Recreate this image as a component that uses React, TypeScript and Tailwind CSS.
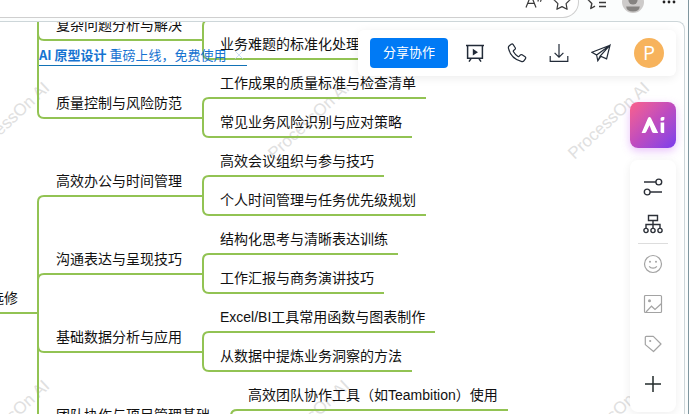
import type { ReactNode } from "react";

type Topic = { label: string; x: number; y: number };
type Leaf = Topic & { end: number };
type Branch = Topic & { fork: number; turn: "up" | "down"; leaves: Leaf[] };

// y is the underline of the topic, end is where that underline stops
const branches: Branch[] = [
  {
    label: "复杂问题分析与解决", x: 56, y: 18, fork: 203, turn: "up",
    leaves: [
      { label: "", x: 220, y: -2, end: 370 },
      { label: "业务难题的标准化处理", x: 220, y: 37, end: 370 },
    ],
  },
  {
    label: "质量控制与风险防范", x: 56, y: 96, fork: 203, turn: "up",
    leaves: [
      { label: "工作成果的质量标准与检查清单", x: 220, y: 76, end: 426 },
      { label: "常见业务风险识别与应对策略", x: 220, y: 115, end: 412 },
    ],
  },
  {
    label: "高效办公与时间管理", x: 56, y: 174, fork: 203, turn: "down",
    leaves: [
      { label: "高效会议组织与参与技巧", x: 220, y: 154, end: 384 },
      { label: "个人时间管理与任务优先级规划", x: 220, y: 193, end: 426 },
    ],
  },
  {
    label: "沟通表达与呈现技巧", x: 56, y: 252, fork: 203, turn: "down",
    leaves: [
      { label: "结构化思考与清晰表达训练", x: 220, y: 232, end: 398 },
      { label: "工作汇报与商务演讲技巧", x: 220, y: 271, end: 384 },
    ],
  },
  {
    label: "基础数据分析与应用", x: 56, y: 330, fork: 203, turn: "up",
    leaves: [
      { label: "Excel/BI工具常用函数与图表制作", x: 220, y: 310, end: 435 },
      { label: "从数据中提炼业务洞察的方法", x: 220, y: 349, end: 412 },
    ],
  },
  {
    label: "团队协作与项目管理基础", x: 56, y: 408, fork: 231, turn: "up",
    leaves: [
      { label: "高效团队协作工具（如Teambition）使用", x: 248, y: 388, end: 508 },
    ],
  },
];

const TRUNK = 38;

function branchPath({ y, fork, turn }: Branch) {
  const from = turn === "up" ? y - 12 : y + 12;
  const near = turn === "up" ? y - 6 : y + 6;
  return `M${TRUNK} ${from}V${near}Q${TRUNK} ${y} ${TRUNK + 6} ${y}H${fork}`;
}

function leafPath(branch: Branch, leaf: Leaf) {
  const near = leaf.y < branch.y ? leaf.y + 6 : leaf.y - 6;
  return `M${branch.fork} ${branch.y}V${near}Q${branch.fork} ${leaf.y} ${branch.fork + 6} ${leaf.y}H${leaf.end}`;
}

function TopicText({ label, x, y }: Topic) {
  return (
    <span className="absolute text-sm leading-5 whitespace-nowrap text-[#111111]" style={{ left: x, top: y - 25 }}>
      {label}
    </span>
  );
}

function MindMap() {
  return (
    <>
      <svg className="absolute inset-0 h-full w-full" fill="none" stroke="#92c353" strokeWidth="2" aria-hidden>
        <path d={`M${TRUNK} 0V88`} />
        <path d={`M${TRUNK} 182V600`} />
        <path d={`M0 291H${TRUNK}`} />
        {branches.map((b) => (
          <g key={b.label}>
            <path d={branchPath(b)} />
            {b.leaves.map((l) => (
              <path key={l.y} d={leafPath(b, l)} />
            ))}
          </g>
        ))}
      </svg>
      <TopicText label="选修" x={-10} y={291} />
      {branches.flatMap((b) => [b, ...b.leaves]).map((t) => (
        <TopicText key={`${t.x}-${t.y}`} label={t.label} x={t.x} y={t.y} />
      ))}
    </>
  );
}

const watermarks = [
  [9, 99], [309, 99], [609, 99],
  [9, 397], [309, 397], [609, 397],
];

function Watermarks() {
  return (
    <div aria-hidden>
      {watermarks.map(([x, y]) => (
        <span
          key={`${x}-${y}`}
          className="absolute -translate-x-1/2 -translate-y-1/2 rotate-[-43deg] text-[17px] leading-5 whitespace-nowrap text-[#e0e0e0]"
          style={{ left: x, top: y }}
        >
          ProcessOn AI
        </span>
      ))}
    </div>
  );
}

function Icon({ children, size = 20 }: { children: ReactNode; size?: number }) {
  return (
    <svg width={size} height={size} viewBox="0 0 20 20" fill="none" stroke="currentColor" strokeWidth="1.2" aria-hidden>
      {children}
    </svg>
  );
}

const toolbarItems = [
  {
    label: "演示",
    icon: (
      <>
        <path d="M1 2.5H19M2.6 2.5V15.3H17.4V2.5M6.2 15.3L4 18.6M13.8 15.3L16 18.6" strokeWidth="1.5" />
        <path d="M7.8 5.8L13 9.2L7.8 12.6Z" fill="currentColor" stroke="none" />
      </>
    ),
  },
  {
    label: "语音通话",
    icon: (
      <path d="M2.3 2.8L4.2 1.3C4.9 .8 5.7 .9 6.2 1.6L8.2 4.7C8.6 5.4 8.4 6.1 7.8 6.6L6.6 7.5C6.2 7.9 6.2 8.3 6.5 8.8C7.6 10.8 9 12.2 11 13.4C11.5 13.7 12 13.6 12.3 13.2L13.2 12.1C13.7 11.5 14.4 11.4 15.1 11.8L18.1 13.8C18.8 14.3 18.9 15 18.5 15.7L17.1 17.7C16.6 18.4 15.7 18.8 14.8 18.6C8 17 3 12 1.4 5.2C1.2 4.3 1.6 3.4 2.3 2.8Z" />
    ),
  },
  {
    label: "下载",
    icon: <path d="M10 1V14M5.6 9.8L10 14.2L14.4 9.8M1.2 13V18.3H18.8V13" />,
  },
  {
    label: "发布",
    icon: <path d="M19 2.2L1 9.3L5.6 12L19 2.2L15.6 15.8L9.2 13.1L19 2.2M5.6 12L6.8 17.8L9.8 13.4M9.2 13.1L6.8 17.8" />,
  },
];

function Toolbar() {
  return (
    <div className="absolute top-2 right-2 flex h-[46px] items-center rounded-md bg-white px-3 shadow-[0_2px_10px_rgba(0,0,0,0.08)]">
      <button className="h-[30px] w-[78px] rounded bg-[#007af5] text-[13px] text-white">分享协作</button>
      <div className="mr-3 ml-1.5 flex">
        {toolbarItems.map((item) => (
          <button key={item.label} aria-label={item.label} className="flex h-[30px] w-[42px] items-center justify-center text-[#222b38]">
            <Icon>{item.icon}</Icon>
          </button>
        ))}
      </div>
      <button className="size-[30px] rounded-full bg-[#f7b35c] font-['Open_Sans',sans-serif] text-xl leading-5 text-white">P</button>
    </div>
  );
}

const formatTools = [
  {
    label: "样式",
    icon: (
      <>
        <path d="M1 5H13M7 15H19" strokeWidth="1.4" />
        <circle cx="15.8" cy="5" r="2.9" strokeWidth="1.4" />
        <circle cx="4.2" cy="15" r="2.9" strokeWidth="1.4" />
      </>
    ),
  },
  {
    label: "结构",
    icon: (
      <g strokeWidth="1.4">
        <path d="M5.5 1.5H14.5V6.5H5.5ZM10 6.5V14.2M3 14.2V10.5H17V14.2" />
        <circle cx="3" cy="16.5" r="2.1" />
        <circle cx="10" cy="16.5" r="2.1" />
        <circle cx="17" cy="16.5" r="2.1" />
      </g>
    ),
  },
];

const insertTools = [
  {
    label: "图标",
    tone: "text-[#a3a3a3]",
    icon: (
      <>
        <circle cx="10" cy="10" r="8.5" />
        <path d="M6.2 12.4C7.8 14.8 12.2 14.8 13.8 12.4" />
        <circle cx="7" cy="7.8" r="1" fill="currentColor" stroke="none" />
        <circle cx="13" cy="7.8" r="1" fill="currentColor" stroke="none" />
      </>
    ),
  },
  {
    label: "图片",
    tone: "text-[#a3a3a3]",
    icon: (
      <>
        <rect x="1.5" y="1.5" width="17" height="17" rx="1" />
        <path d="M3 18L8.5 12.2L12 15.4L18.5 9.5" />
        <circle cx="6.5" cy="6.8" r="1.5" fill="currentColor" stroke="none" />
      </>
    ),
  },
  {
    label: "标签",
    tone: "text-[#a3a3a3]",
    icon: (
      <>
        <path d="M2.3 3.3Q2.3 2.3 3.3 2.3H10.3L18 10L10.5 17.5L2.3 10.6Z" strokeLinejoin="round" />
        <circle cx="7.2" cy="7" r="1.1" fill="currentColor" stroke="none" />
      </>
    ),
  },
  {
    label: "更多",
    tone: "text-[#222b2b]",
    icon: <path d="M10 2V18M2 10H18" strokeWidth="1.5" />,
  },
];

function SideRail() {
  return (
    <div className="absolute top-20 right-2 flex w-[46px] flex-col gap-3">
      <button
        aria-label="AI 助手"
        className="flex h-[46px] items-center justify-center rounded-lg bg-linear-135 from-[#fb5f8a] via-[#bf4bbf] to-[#7c3aed] text-white shadow-[0_3px_8px_rgba(190,80,240,0.35)]"
      >
        <svg width="24" height="18" viewBox="0 0 24 18" fill="currentColor" aria-hidden>
          <path d="M.6 17L6.8 2.4Q8.4 -.2 10.2 2.4L17.2 17H12.8Q11.6 17 11 15.8L8.5 9.2L5.2 16Q4.7 17 3.6 17Z" />
          <path d="M19.6 6.6H23.2V17H21.2Q19.6 17 19.6 15.4Z" />
          <path d="M19.6 2.6Q19.6 1 21.2 1H23.4V3Q23.4 4.8 21.6 4.8H19.6Z" />
        </svg>
      </button>
      <div className="rounded-lg bg-white py-2 shadow-[0_2px_10px_rgba(0,0,0,0.07)]">
        {formatTools.map((tool) => (
          <button key={tool.label} aria-label={tool.label} className="flex h-[37px] w-full items-center justify-center text-[#2c3038]">
            <Icon>{tool.icon}</Icon>
          </button>
        ))}
        <hr className="mx-2 mt-px border-[#dddddd]" />
        {insertTools.map((tool) => (
          <button key={tool.label} aria-label={tool.label} className={`flex h-10 w-full items-center justify-center ${tool.tone}`}>
            <Icon>{tool.icon}</Icon>
          </button>
        ))}
      </div>
    </div>
  );
}

function PromoLink() {
  return (
    <div className="absolute top-[23px] left-[39px] flex items-center border-b border-[#1272b6] text-[13px] leading-5 whitespace-nowrap text-[#1673d1]">
      <a href="#prototype" className="font-['Noto_Sans_CJK_SC',sans-serif]">
        <b>AI 原型设计</b> 重磅上线，免费使用
      </a>
      <button aria-label="关闭" className="ml-1 flex size-4 items-center justify-center text-[#b9d3f3]">
        <Icon size={12}>
          <path d="M3 3L17 17M17 3L3 17" />
        </Icon>
      </button>
    </div>
  );
}

// only the lower half of the browser's address row is in view
function BrowserBar() {
  return (
    <header className="flex h-[21px] shrink-0 flex-col justify-end overflow-hidden">
      <div className="flex h-[38px] shrink-0 items-center pr-px text-[#3a3a3a]">
        <div className="flex h-8 flex-1 items-center justify-end rounded-r-full border border-l-0 border-[#cfcfcf] bg-white pr-0.5">
          <button aria-label="朗读此页" className="flex w-7 justify-center">
            <Icon>
              <path d="M2 15.5L7 3L12 15.5M3.8 11.4H10.2M13.6 4Q15 6.8 13.8 9.6M16.4 3.4Q18 6.6 16.4 9.8" />
            </Icon>
          </button>
          <button aria-label="收藏" className="flex w-7 justify-center">
            <Icon>
              <path d="M10 1.6L12.5 6.8L18.2 7.6L14.1 11.6L15.1 17.3L10 14.6L4.9 17.3L5.9 11.6L1.8 7.6L7.5 6.8Z" strokeLinejoin="round" />
            </Icon>
          </button>
        </div>
        <button aria-label="收藏夹" className="flex w-9 justify-center">
          <Icon>
            <path d="M14 7L10.8 6.8L8.5 1.6L6.2 6.8L1 7.6L4.8 11.6L3.8 16.5L8 14.2M12 10.5H19M12 14.5H19" strokeLinejoin="round" strokeWidth="1.4" />
          </Icon>
        </button>
        <button aria-label="个人资料" className="flex w-9 justify-center">
          <svg width="22" height="22" viewBox="0 0 22 22" aria-hidden>
            <circle cx="11" cy="11" r="11" fill="#cdcbca" />
            <circle cx="11" cy="9" r="4.6" fill="#858381" />
            <path d="M4.2 15.4H17.8Q17.4 20.4 11 20.4Q4.6 20.4 4.2 15.4Z" fill="#858381" />
          </svg>
        </button>
        <button aria-label="设置及其他" className="flex w-9 justify-center">
          <svg width="14" height="4" viewBox="0 0 14 4" fill="#222222" aria-hidden>
            <circle cx="2" cy="2" r="1.4" />
            <circle cx="7" cy="2" r="1.4" />
            <circle cx="12" cy="2" r="1.4" />
          </svg>
        </button>
      </div>
    </header>
  );
}

export default function App() {
  return (
    <div className="flex h-screen flex-col overflow-hidden border-r border-[#7f969f] bg-[#fbfdfd] font-['Liberation_Sans','Noto_Sans_CJK_SC',sans-serif]">
      <BrowserBar />
      <main className="relative mr-[3px] flex-1 overflow-hidden rounded-tr-lg border-t border-r border-[#cdd6d9] bg-white">
        <Watermarks />
        <MindMap />
        <PromoLink />
        <Toolbar />
        <SideRail />
      </main>
    </div>
  );
}
